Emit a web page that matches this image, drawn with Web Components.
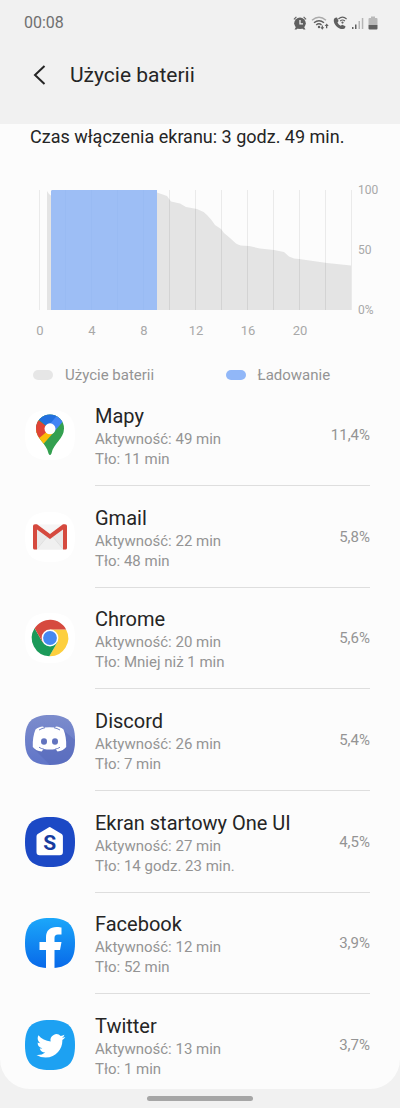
<!DOCTYPE html>
<html lang="pl">
<head>
<meta charset="utf-8">
<meta name="viewport" content="width=device-width, initial-scale=1">
<title>Użycie baterii</title>
<style>
  body { margin: 0; background: #f1f1f1; font-family: Roboto, "Noto Sans", sans-serif; color: #252525; }
</style>
</head>
<body>
<battery-page>
  <status-bar slot="top">00:08</status-bar>
  <app-header slot="top">Użycie baterii</app-header>
  <span slot="summary">Czas włączenia ekranu: 3 godz. 49 min.</span>
  <usage-chart></usage-chart>
  <usage-legend></usage-legend>
  <app-list>
    <app-row icon="maps"><span slot="name">Mapy</span><span slot="active">Aktywność: 49 min</span><span slot="background">Tło: 11 min</span><span slot="share">11,4%</span></app-row>
    <app-row icon="gmail"><span slot="name">Gmail</span><span slot="active">Aktywność: 22 min</span><span slot="background">Tło: 48 min</span><span slot="share">5,8%</span></app-row>
    <app-row icon="chrome"><span slot="name">Chrome</span><span slot="active">Aktywność: 20 min</span><span slot="background">Tło: Mniej niż 1 min</span><span slot="share">5,6%</span></app-row>
    <app-row icon="discord"><span slot="name">Discord</span><span slot="active">Aktywność: 26 min</span><span slot="background">Tło: 7 min</span><span slot="share">5,4%</span></app-row>
    <app-row icon="home"><span slot="name">Ekran startowy One UI</span><span slot="active">Aktywność: 27 min</span><span slot="background">Tło: 14 godz. 23 min.</span><span slot="share">4,5%</span></app-row>
    <app-row icon="facebook"><span slot="name">Facebook</span><span slot="active">Aktywność: 12 min</span><span slot="background">Tło: 52 min</span><span slot="share">3,9%</span></app-row>
    <app-row icon="twitter"><span slot="name">Twitter</span><span slot="active">Aktywność: 13 min</span><span slot="background">Tło: 1 min</span><span slot="share">3,7%</span></app-row>
  </app-list>
</battery-page>

<script>
const define = (name, markup) => customElements.define(name, class extends HTMLElement {
  constructor() {
    super();
    this.attachShadow({ mode: 'open' }).innerHTML = markup;
  }
});

define('battery-page', `
  <style>
    :host { display: flex; flex-direction: column; min-height: 100vh; }
    main { flex: 1; display: flex; flex-direction: column; background: #fcfcfc; border-radius: 0 0 30px 30px; }
    h2 { margin: 0 0 33px; padding: 1px 30px 0; font-size: 18px; line-height: 24px; font-weight: 400; }
    nav { height: 19px; display: flex; align-items: center; justify-content: center; }
    nav i { width: 106px; height: 5px; border-radius: 3px; background: #a6a6a6; }
  </style>
  <slot name="top"></slot>
  <main><h2><slot name="summary"></slot></h2><slot></slot></main>
  <nav aria-label="System"><i></i></nav>`);

define('status-bar', `
  <style>
    :host { display: flex; align-items: center; justify-content: space-between; height: 46px; padding: 0 22px 0 24px; font-size: 16px; line-height: 20px; color: #6f6f6f; }
    div { display: flex; align-items: center; gap: 4px; }
    svg { display: block; fill: #606060; }
  </style>
  <slot></slot>
  <div aria-hidden="true">
    <svg width="14" height="14" viewBox="0 0 14 14"><path d="M3 .5.5 3 1.3 3.8 3.8 1.3ZM11 .5 13.5 3 12.7 3.8 10.2 1.3Z"/><circle cx="7" cy="7.3" r="5.8"/><path d="M3 11 1.500 13.500H3.500L5 12ZM11 11 12.500 13.500H10.500L9 12Z"/><path d="M7 4V7.8H10" fill="none" stroke="#f1f1f1" stroke-width="1.3"/></svg>
    <svg width="18" height="14" viewBox="0 0 18 14"><g fill="none" stroke="#606060" stroke-width="1.4"><path d="M1 4.200Q8 -1.800 15 4.200" stroke="#aaa"/><path d="M3 6.800Q8 2.500 13 6.800M5.200 9Q8 6.600 10.500 9"/></g><circle cx="8" cy="11" r="1.200"/><path d="M10.700 9.500H11.900V11.300H13.200L11.300 13.800 9.400 11.300H10.700ZM15 12.300V10H13.700L15.700 7.500 17.700 10H16.300V12.300Z"/></svg>
    <svg width="14" height="14" viewBox="0 0 14 14"><path d="M2.400 1.700 4 1.500 5.600 5 4.500 6.500Q5.500 8.700 7.700 9.800L9.200 8.700 12.500 10.300Q12.500 12.700 10.300 13.100C5 13.500.2 8 .8 3.700Q1 2.300 2.400 1.700Z"/><g fill="none" stroke="#606060" stroke-width="1.200"><path d="M5.400 3Q9.500-.6 13.600 3M7.200 5Q9.500 3 11.900 5"/></g><circle cx="9.500" cy="6.600" r="1.100"/></svg>
    <svg width="13" height="14" viewBox="0 0 13 14"><path d="M1 11h1.500v2H1zM4 8.500h1.500V13H4z"/><path d="M7.500 5H9v8H7.500zM10.800 2h1.500v11h-1.500z" fill="#b5b5b5"/></svg>
    <svg width="10" height="14" viewBox="0 0 10 14"><path d="M3 .5H7V2H8.500Q9.500 2 9.500 3V9H.5V3Q.5 2 1.500 2H3Z" fill="#b9b9b9"/><path d="M.5 9h9v3.500q0 1-1 1h-7q-1 0-1-1z"/></svg>
  </div>`);

define('app-header', `
  <style>
    :host { display: flex; align-items: center; gap: 15px; height: 58px; padding: 0 24px 20px; }
    button { display: grid; place-items: center; width: 31px; height: 32px; margin: 0; padding: 0; border: 0; background: none; color: inherit; }
    svg { display: block; }
    h1 { margin: 0; font-size: 21px; line-height: 28px; font-weight: 400; }
  </style>
  <button type="button" aria-label="Wstecz"><svg width="14" height="20" viewBox="0 0 14 20"><path d="M11.500 1 2 10l9.500 9" fill="none" stroke="#252525" stroke-width="2"/></svg></button>
  <h1><slot></slot></h1>`);

const hours = Array.from({ length: 13 }, (_, i) => `M${i * 26 - 0.5} 0V120`).join('');
define('usage-chart', `
  <style>
    :host { display: grid; grid-template-columns: 1fr 42px; column-gap: 6px; padding-left: 14px; font-size: 12px; line-height: 16px; color: #a8a8a8; }
    .plot { display: block; width: calc(100% - 26px); height: 120px; margin: 8px 0 8px 26px; overflow: visible; }
    .levels { display: flex; flex-direction: column; justify-content: space-between; }
    .hours { display: grid; grid-template-columns: repeat(6, 1fr); margin: 5px 26px 0 0; font-size: 13px; text-align: center; }
  </style>
  <svg class="plot" viewBox="0 0 312 120" preserveAspectRatio="none" role="img" aria-label="Poziom baterii">
    <path d="M7 120V1L9 4 11.500 6V0H117V2.500L127 6 131 11.500 140 13.500 146 17 157 19Q163 21 167 25 172 30 175 35 178 37 181 39L184 43 190 48 196 53.500Q199 56 209 56L220 58.500 234 60 244 62 249 66.500Q254 69 259 69L287 73 311 75.500V120Z" fill="#e4e4e4"/>
    <path d="${hours}" stroke="#000" stroke-opacity=".07" vector-effect="non-scaling-stroke"/>
    <path d="M11 120V1L12 0H117V120Z" fill="#9dbef5"/>
    <path d="M25.500 0V120M51.500 0V120M77.500 0V120M103.500 0V120" stroke="#96b8f1" stroke-opacity=".5"/>
  </svg>
  <div class="levels"><span>100</span><span>50</span><span>0%</span></div>
  <div class="hours"><span>0</span><span>4</span><span>8</span><span>12</span><span>16</span><span>20</span></div>`);

define('usage-legend', `
  <style>
    :host { display: grid; grid-template-columns: 4fr 3fr; margin-top: 26px; padding: 0 30px 0 33px; font-size: 15px; line-height: 20px; color: #949494; }
    span { display: flex; align-items: center; gap: 12px; }
    i { width: 20px; height: 10px; border-radius: 5px; background: #e6e6e6; }
    .charge { background: #91b7f8; }
  </style>
  <span><i></i>Użycie baterii</span><span><i class="charge"></i>Ładowanie</span>`);

define('app-list', `
  <style>
    :host { flex: 1; display: flex; flex-direction: column; justify-content: space-between; }
  </style>
  <slot></slot>`);

const squircle = 'M25 0C43 0 50 7 50 25S43 50 25 50 0 43 0 25 7 0 25 0Z';
const tile = fill => `<path d="${squircle}" fill="${fill}"/>`;
const icons = {
  maps: tile('#fff') + `
    <clipPath id="pin"><path d="M25 4.500A14 14 0 0 1 39 18.500C39 29 28.500 33 26.500 43.500Q25 46.500 23.500 43.500C21.500 33 11 29 11 18.500A14 14 0 0 1 25 4.500Z"/></clipPath>
    <g clip-path="url(#pin)"><path d="M0 0H50V50H0Z" fill="#34a050"/><path d="M0 45V20L25 19 29 22 14 39Z" fill="#fbbc09"/><path d="M0 40V0L25 19Z" fill="#e04336"/><path d="M13 9 20 0H35L25 19Z" fill="#2370df"/><path d="M34 3 25 14V19L29 22 40 9V0Z" fill="#4285f4"/></g>
    <circle cx="25" cy="18.800" r="5.500" fill="#fff"/>`,
  gmail: tile('#fff') + `
    <path d="M9 13H41V37.500H9Z" fill="#e9e9e9"/><path d="M12 37 22 25 25 27 28 25 38 37" fill="#f0f0f0" stroke="#d8d8d8" stroke-width=".6"/><path d="M12 12.500H38L25 22Z" fill="#f6f6f6"/>
    <path d="M8 37V14Q8 12.300 10 12.300H12L25 22 38 12.300H40Q42 12.300 42 14V36Q42 37.500 40.500 37.500H38V17.500L25 27 12 17.500V37.500H9.500Q8 37.500 8 36Z" fill="#d54a3f"/>`,
  chrome: tile('#fff') + `
    <path d="M25 16.500H41.100A18.200 18.200 0 0 1 24.300 43.200L32.400 29.200 25 25Z" fill="#fdcf3e"/><path d="M24.300 43.200A18.200 18.200 0 0 1 9.600 15.300L17.600 29.200 25 25 32.400 29.200Z" fill="#1b9a59"/><path d="M9.600 15.300A18.200 18.200 0 0 1 41.100 16.500H25V25L17.600 29.200Z" fill="#d64a3f"/>
    <circle cx="25" cy="25" r="8.400" fill="#fff"/><circle cx="25" cy="25" r="6.900" fill="#4688f1"/>`,
  discord: `<linearGradient id="blurple" x2="0" y2="1"><stop stop-color="#7c8ccc"/><stop offset="1" stop-color="#6075c8"/></linearGradient><clipPath id="edge"><path d="${squircle}"/></clipPath>` + tile('url(#blurple)') + `
    <path d="M9 34 25 50H50V25L38 15Z" fill="#5364b3" opacity=".4" clip-path="url(#edge)"/>
    <path d="M19 12.500 18 11.500C15 11.800 12.500 12.800 10.500 14.500 8.500 19.500 7.500 25 7.800 32 10 34.800 13 36.300 16.600 36.400L18.700 34Q25 35 30.500 34L32.500 36.400C36 36.200 39 34.800 41.200 32 41.500 25 40.500 19.500 38.500 14.500 36.500 12.800 34 11.800 31 11.500L30 12.500Q24.500 11.800 19 12.500Z" fill="#fff"/>
    <path d="M14 15Q17 13.300 20 12.700M35 15Q32 13.300 29 12.700M14 32.200Q16 33.700 19 34.200M35 32.200Q33 33.700 30 34.200" fill="none" stroke="#7182c5"/>
    <ellipse cx="19" cy="26.500" rx="3" ry="3.300" fill="#6274bf"/><ellipse cx="30" cy="26.500" rx="3" ry="3.300" fill="#6274bf"/>`,
  home: tile('#1c49c5') + `
    <path d="M23.200 10.700Q24.700 9.500 26.200 10.700L36.700 17Q37.900 17.800 37.900 19.500V35Q37.900 38.200 34.700 38.200H14.700Q11.500 38.200 11.500 35V19.500Q11.500 17.800 12.700 17Z" fill="#fff"/>
    <text x="24.700" y="33" text-anchor="middle" font-size="21" font-weight="700" fill="#173c9f">S</text>`,
  facebook: `<linearGradient id="sky" x2="0" y2="1"><stop stop-color="#1ba7fa"/><stop offset="1" stop-color="#0869e9"/></linearGradient>` + tile('url(#sky)') + `
    <path d="M21 50V32H14.500V24H21V19.500C21 12.500 25 9 31.500 9 34 9 36.500 9.500 36.500 9.500V16.500H33C30.500 16.500 29.500 18 29.500 20V24H36.500L35 32H29.500V50Z" fill="#fff"/>`,
  twitter: tile('#1da1f2') + `
    <path transform="translate(11.500 11.500) scale(1.200)" fill="#fff" d="M23.953 4.570a10 10 0 01-2.825.775 4.958 4.958 0 002.163-2.723c-.951.555-2.005.959-3.127 1.184a4.920 4.920 0 00-8.384 4.482C7.690 8.095 4.067 6.130 1.640 3.162a4.822 4.822 0 00-.666 2.475c0 1.710.870 3.213 2.188 4.096a4.904 4.904 0 01-2.228-.616v.060a4.923 4.923 0 003.946 4.827 4.996 4.996 0 01-2.212.085 4.936 4.936 0 004.604 3.417 9.867 9.867 0 01-6.102 2.105c-.390 0-.779-.023-1.170-.067a13.995 13.995 0 007.557 2.209c9.053 0 13.998-7.496 13.998-13.985 0-.210 0-.420-.015-.630A9.935 9.935 0 0024 4.590z"/>`
};

customElements.define('app-row', class extends HTMLElement {
  constructor() {
    super();
    this.attachShadow({ mode: 'open' }).innerHTML = `
      <style>
        :host { display: flex; padding: 0 30px 0 25px; gap: 20px; }
        svg { flex: none; display: block; width: 50px; height: 50px; margin-top: 25px; }
        .body { flex: 1; display: flex; align-items: center; justify-content: space-between; padding: 16px 0; border-bottom: 1px solid #dedede; }
        :host(:last-child) .body { padding-bottom: 10px; border: 0; }
        .text { padding-top: 2px; }
        h3, p { margin: 0; font-weight: 400; }
        h3 { font-size: 20px; line-height: 26px; }
        p, .share { font-size: 15px; line-height: 20px; color: #949494; }
      </style>
      <svg viewBox="0 0 50 50" aria-hidden="true">${icons[this.getAttribute('icon')]}</svg>
      <div class="body">
        <div class="text">
          <h3><slot name="name"></slot></h3>
          <p><slot name="active"></slot></p>
          <p><slot name="background"></slot></p>
        </div>
        <span class="share"><slot name="share"></slot></span>
      </div>`;
  }
});
</script>
</body>
</html>
